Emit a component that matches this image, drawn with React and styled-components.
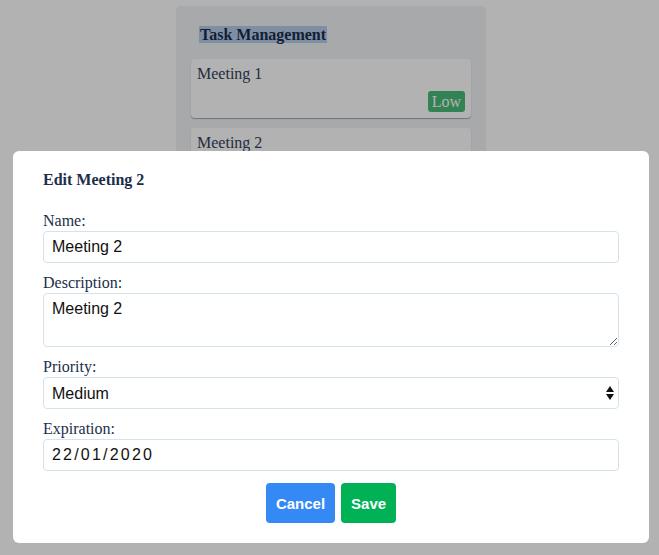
import React from 'react'
import styled, { createGlobalStyle } from 'styled-components'

const GlobalStyle = createGlobalStyle`
    html, body {
        margin: 0;
        padding: 0;
        background: #ffffff;
        font-family: "Liberation Serif", "Times New Roman", serif;
        color: #1c2e4a;
    }
`;

const Page = styled.div`
    height: 555px;
    display: flex;
    align-items: flex-start;
    justify-content: center;
    padding-top: 6px;
    box-sizing: border-box;
    overflow: hidden;
`;

const Column = styled.div`
    width: 310px;
    margin-left: 3px;
    background: #f1f2f4;
    border-radius: 5px;
    padding: 18px 15px;
    box-sizing: border-box;
    display: flex;
    flex-direction: column;
    gap: 10px;
`;

const ColumnTitle = styled.h2`
    margin: 0 0 3px 8px;
    font-size: 16px;
    font-weight: bold;
    line-height: 22px;
    & span {
        background: #b6cdea;
        padding: 0 1px;
    }
`;

const Card = styled.div`
    background: #ffffff;
    border-radius: 4px;
    box-shadow: 0 1px 1px rgba(9, 30, 66, 0.35);
    padding: 6px 6px 6px 6px;
    height: 59px;
    box-sizing: border-box;
    display: flex;
    flex-direction: column;
    font-size: 16px;
    color: #33415c;
`;

const Badge = styled.span`
    align-self: flex-end;
    margin-top: auto;
    background: ${p => p.$color};
    color: #ffffff;
    border-radius: 3px;
    padding: 1px 4px;
    font-size: 16px;
    line-height: 19px;
`;

const Overlay = styled.div`
    position: fixed;
    inset: 0;
    background: rgba(0, 0, 0, 0.3);
`;

const Modal = styled.div`
    position: fixed;
    left: 13px;
    top: 151px;
    width: 636px;
    background: #ffffff;
    border-radius: 6px;
    padding: 20px 30px;
    box-sizing: border-box;
`;

const ModalTitle = styled.h3`
    margin: 0 0 23px 0;
    font-size: 16px;
    line-height: 18px;
    font-weight: bold;
    color: #1c2e4a;
`;

const Field = styled.div`
    display: flex;
    flex-direction: column;
    margin-bottom: ${p => p.$last ? '12px' : '11px'};
`;

const Label = styled.label`
    font-size: 16px;
    line-height: 18px;
    margin-bottom: 1px;
    color: #1c2e4a;
`;

const controlBase = `
    box-sizing: border-box;
    width: 100%;
    border: 1px solid #d3e3ed;
    border-radius: 4px;
    background: #ffffff;
    font-family: "Liberation Sans", Arial, sans-serif;
    font-size: 16px;
    color: #111111;
    padding: 0 8px;
    outline: none;
`;

const Input = styled.input`
    ${controlBase}
    height: 32px;
    letter-spacing: ${p => p.$spaced ? '2.2px' : 'normal'};
`;

const TextArea = styled.textarea`
    ${controlBase}
    height: 54px;
    padding: 6px 8px;
    resize: vertical;
    display: block;
`;

const SelectWrap = styled.div`
    position: relative;
`;

const Select = styled.select`
    ${controlBase}
    height: 32px;
    appearance: none;
    -webkit-appearance: none;
`;

const Arrows = styled.svg`
    position: absolute;
    right: 5px;
    top: 9px;
    pointer-events: none;
`;

const Actions = styled.div`
    display: flex;
    justify-content: center;
    gap: 6px;
`;

const Button = styled.button`
    height: 40px;
    padding: 0 10px;
    border: none;
    border-radius: 4px;
    background: ${p => p.$color};
    color: #ffffff;
    font-family: "Liberation Sans", Arial, sans-serif;
    font-weight: bold;
    font-size: 15px;
    cursor: pointer;
`;

const App = () => {
  return (
    <>
      <GlobalStyle />
      <Page>
        <Column>
          <ColumnTitle><span>Task Management</span></ColumnTitle>
          <Card>
            Meeting 1
            <Badge $color="#48bb78">Low</Badge>
          </Card>
          <Card>
            Meeting 2
            <Badge $color="#ecc94b">Medium</Badge>
          </Card>
        </Column>
      </Page>
      <Overlay />
      <Modal>
        <ModalTitle>Edit Meeting 2</ModalTitle>
        <Field>
          <Label>Name:</Label>
          <Input defaultValue="Meeting 2" />
        </Field>
        <Field>
          <Label>Description:</Label>
          <TextArea defaultValue="Meeting 2" />
        </Field>
        <Field>
          <Label>Priority:</Label>
          <SelectWrap>
            <Select defaultValue="Medium">
              <option>Low</option>
              <option>Medium</option>
              <option>High</option>
            </Select>
            <Arrows width="8" height="14" viewBox="0 0 8 14">
              <path d="M4 0 L8 6 L0 6 Z" fill="#111" />
              <path d="M0 8 L8 8 L4 14 Z" fill="#111" />
            </Arrows>
          </SelectWrap>
        </Field>
        <Field $last>
          <Label>Expiration:</Label>
          <Input $spaced defaultValue="22/01/2020" />
        </Field>
        <Actions>
          <Button $color="#3589f5">Cancel</Button>
          <Button $color="#00b155">Save</Button>
        </Actions>
      </Modal>
    </>
  )
}

export default App
